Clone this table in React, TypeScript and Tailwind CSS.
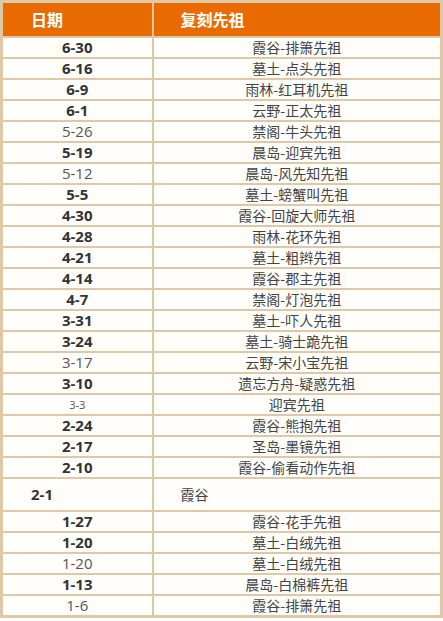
const rows: { d: string; n: string; b?: boolean; s?: boolean }[] = [
  { d: "6-30", n: "霞谷-排箫先祖", b: true },
  { d: "6-16", n: "墓土-点头先祖", b: true },
  { d: "6-9", n: "雨林-红耳机先祖", b: true },
  { d: "6-1", n: "云野-正太先祖", b: true },
  { d: "5-26", n: "禁阁-牛头先祖" },
  { d: "5-19", n: "晨岛-迎宾先祖", b: true },
  { d: "5-12", n: "晨岛-风先知先祖" },
  { d: "5-5", n: "墓土-螃蟹叫先祖", b: true },
  { d: "4-30", n: "霞谷-回旋大师先祖", b: true },
  { d: "4-28", n: "雨林-花环先祖", b: true },
  { d: "4-21", n: "墓土-粗辫先祖", b: true },
  { d: "4-14", n: "霞谷-郡主先祖", b: true },
  { d: "4-7", n: "禁阁-灯泡先祖", b: true },
  { d: "3-31", n: "墓土-吓人先祖", b: true },
  { d: "3-24", n: "墓土-骑士跪先祖", b: true },
  { d: "3-17", n: "云野-宋小宝先祖" },
  { d: "3-10", n: "遗忘方舟-疑惑先祖", b: true },
  { d: "3-3", n: "迎宾先祖", s: true },
  { d: "2-24", n: "霞谷-熊抱先祖", b: true },
  { d: "2-17", n: "圣岛-墨镜先祖", b: true },
  { d: "2-10", n: "霞谷-偷看动作先祖", b: true },
]

const tail: { d: string; n: string; b?: boolean }[] = [
  { d: "1-27", n: "霞谷-花手先祖", b: true },
  { d: "1-20", n: "墓土-白绒先祖", b: true },
  { d: "1-20", n: "墓土-白绒先祖" },
  { d: "1-13", n: "晨岛-白棉裤先祖", b: true },
  { d: "1-6", n: "霞谷-排箫先祖" },
]

const cell = "border-2 border-[#dfc8a7] p-0"
const font = { fontFamily: '"Noto Sans CJK SC", sans-serif' }

function Row({ d, n, b, s }: { d: string; n: string; b?: boolean; s?: boolean }) {
  return (
    <tr className="h-[21px]">
      <td
        className={`${cell} text-center leading-[19px] font-['Open_Sans',sans-serif] ${
          s ? "text-[11px]" : "text-[15px]"
        } ${b ? "font-bold text-[#333]" : "font-normal text-[#555]"}`}
      >
        {d}
      </td>
      <td className={`${cell} text-center text-[14px] leading-[19px] text-[#444]`} style={font}>
        {n}
      </td>
    </tr>
  )
}

export default function App() {
  return (
    <div className="h-[621px] w-[443px] bg-white">
      <table className="w-[443px] table-fixed border-collapse border-[3px] border-[#dfc8a7] bg-[#fffefb]">
        <colgroup>
          <col className="w-[151px]" />
          <col />
        </colgroup>
        <thead>
          <tr className="h-[35px] bg-[#e96b00]">
            <th
              className={`${cell} pl-[28px] text-left text-[16px] font-bold text-white`}
              style={font}
            >
              日期
            </th>
            <th
              className={`${cell} pl-[27px] text-left text-[16px] font-bold text-white`}
              style={font}
            >
              复刻先祖
            </th>
          </tr>
        </thead>
        <tbody>
          {rows.map((r, i) => (
            <Row key={i} {...r} />
          ))}
          <tr className="h-[33px]">
            <td
              className={`${cell} pl-[28px] text-left font-['Open_Sans',sans-serif] text-[15px] font-bold text-[#333]`}
            >
              2-1
            </td>
            <td className={`${cell} pl-[27px] text-left text-[14px] text-[#444]`} style={font}>
              霞谷
            </td>
          </tr>
          {tail.map((r, i) => (
            <Row key={"t" + i} {...r} />
          ))}
        </tbody>
      </table>
    </div>
  )
}
